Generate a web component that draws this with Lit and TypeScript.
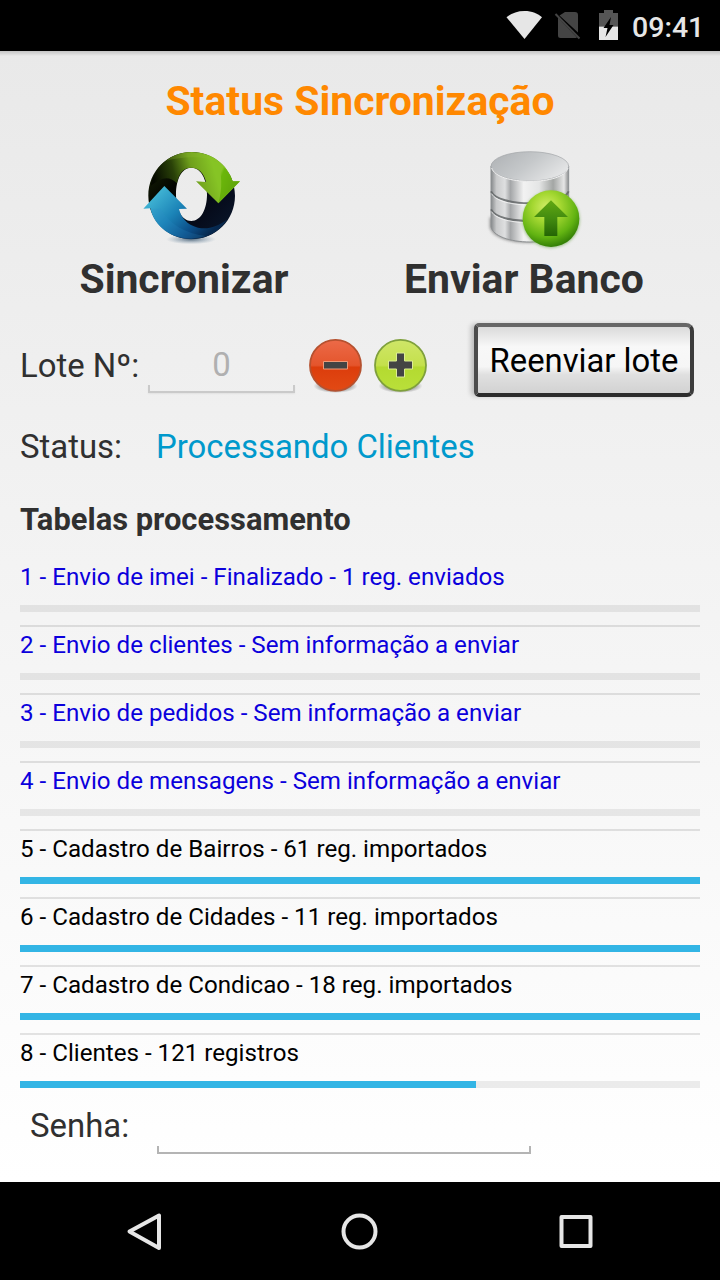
import {html, css, svg, LitElement} from 'lit';
import {customElement, property, state} from 'lit/decorators.js';
import {classMap} from 'lit/directives/class-map.js';
import {map} from 'lit/directives/map.js';

interface Tabela {
  texto: string;
  enviado: boolean;
  progresso: number;
}

const syncIcon = html`
  <svg width="120" height="115" viewBox="0 0 360 345">
    <defs>
      <linearGradient id="dark" x1="0" y1="0" x2="1" y2="1">
        <stop offset="0" stop-color="#1c2a05" />
        <stop offset="0.35" stop-color="#030501" />
        <stop offset="0.7" stop-color="#060c1c" />
        <stop offset="1" stop-color="#0a1a30" />
      </linearGradient>
      <linearGradient id="green" gradientUnits="userSpaceOnUse" x1="75" y1="130" x2="250" y2="80">
        <stop offset="0" stop-color="#050900" />
        <stop offset="0.35" stop-color="#2a4208" />
        <stop offset="0.65" stop-color="#6f9f1c" />
        <stop offset="1" stop-color="#86c425" />
      </linearGradient>
      <linearGradient id="tip" gradientUnits="userSpaceOnUse" x1="262" y1="120" x2="310" y2="140">
        <stop offset="0" stop-color="#86c425" />
        <stop offset="0.15" stop-color="#6bb70a" />
        <stop offset="1" stop-color="#62a80a" />
      </linearGradient>
      <linearGradient id="blue" gradientUnits="userSpaceOnUse" x1="90" y1="150" x2="230" y2="290">
        <stop offset="0" stop-color="#3fb3d3" />
        <stop offset="0.4" stop-color="#1b83b7" />
        <stop offset="0.75" stop-color="#0b4d87" />
        <stop offset="1" stop-color="#06284e" />
      </linearGradient>
      <radialGradient id="floor">
        <stop offset="0" stop-color="#1c3a55" stop-opacity="0.7" />
        <stop offset="1" stop-color="#5b7f9c" stop-opacity="0" />
      </radialGradient>
    </defs>
    <ellipse cx="183" cy="298" rx="75" ry="15" fill="url(#floor)" />
    <path fill="url(#dark)" fill-rule="evenodd"
      d="M185 36C258 36 315 94 315 167S258 297 185 297 55 240 55 167 112 36 185 36Z
         M184 83C155 83 138 118 138 163S155 243 184 243 231 208 231 163 213 83 184 83Z" />
    <path fill="url(#green)"
      d="M76 98C100 58 140 36 185 36C245 36 292 72 308 124L330 124L265 190L198 124L228 126C222 98 205 83 184 83C160 83 146 100 141 130C115 105 95 112 62 138C64 124 68 111 76 98Z" />
    <path fill="#8fbd2e" fill-opacity="0.25" d="M108 62C150 30 215 28 262 66C210 45 160 50 108 62Z" />
    <path fill="url(#tip)" d="M262 66Q297 88 308 124L330 124L265 190Q284 120 262 66Z" />
    <path fill="url(#blue)"
      d="M103 138L171 206L147 207C153 232 170 254 204 263C232 269 262 262 292 238C268 276 230 297 185 297C125 297 74 262 61 205L40 206Z" />
    <path fill="#2f8cc8" fill-opacity="0.2" d="M62 206Q70 255 125 283Q175 305 228 288Q130 275 92 206Z" />
  </svg>
`;

const databaseIcon = html`
  <svg width="120" height="115" viewBox="0 0 360 345">
    <defs>
      <linearGradient id="metal">
        <stop offset="0" stop-color="#85888a" />
        <stop offset="0.07" stop-color="#c9cacb" />
        <stop offset="0.18" stop-color="#dedfe0" />
        <stop offset="0.25" stop-color="#a4a6a8" />
        <stop offset="0.42" stop-color="#f2f2f2" />
        <stop offset="0.62" stop-color="#e4e5e5" />
        <stop offset="0.8" stop-color="#a3a6a4" />
        <stop offset="0.94" stop-color="#e6e6e6" />
        <stop offset="1" stop-color="#8a8c8d" />
      </linearGradient>
      <linearGradient id="lid" x1="0" y1="0" x2="1" y2="0.5">
        <stop offset="0" stop-color="#adb0b3" />
        <stop offset="0.55" stop-color="#c5c8ca" />
        <stop offset="1" stop-color="#e2e3e4" />
      </linearGradient>
      <radialGradient id="ball" cx="0.42" cy="0.3" r="0.7">
        <stop offset="0" stop-color="#d2ee68" />
        <stop offset="0.35" stop-color="#a5d832" />
        <stop offset="0.75" stop-color="#62b312" />
        <stop offset="1" stop-color="#348006" />
      </radialGradient>
      <linearGradient id="up" x1="0" y1="0" x2="0" y2="1">
        <stop offset="0" stop-color="#62a812" />
        <stop offset="0.5" stop-color="#438c10" />
        <stop offset="1" stop-color="#246405" />
      </linearGradient>
      <filter id="soft" x="-20%" y="-20%" width="140%" height="140%">
        <feGaussianBlur stdDeviation="4" />
      </filter>
    </defs>
    <path d="M44 230V262C52 294 110 312 180 308Z" fill="#555" opacity="0.6" filter="url(#soft)" />
    <path fill="url(#metal)" stroke="#8e9193" stroke-width="3"
      d="M48 78V260C53 288 105 306 165 306S278 288 281 260V78Z" />
    <path fill="none" stroke="#5e6163" stroke-width="6" opacity="0.8"
      d="M48 154C60 178 110 190 165 190S270 178 281 154M48 208C60 232 110 243 165 243S270 232 281 208" />
    <path fill="none" stroke="#f7f7f7" stroke-width="3" opacity="0.8"
      d="M50 161C62 184 112 195 165 195M50 215C62 238 112 248 165 248" />
    <ellipse cx="164.500" cy="79" rx="116.500" ry="44" fill="url(#lid)" stroke="#a0a3a6" stroke-width="2" />
    <path d="M50 84C58 110 108 124 165 124S272 110 279 84" fill="none" stroke="#f1f1f1" stroke-width="3" />
    <ellipse cx="228" cy="239" rx="86" ry="84" fill="#3f8a12" opacity="0.5" filter="url(#soft)" />
    <circle cx="228" cy="236" r="85" fill="url(#ball)" />
    <path d="M228 181L279 231H247V288H208V231H177Z" fill="url(#up)" />
  </svg>
`;

const roundIcon = (id: string, stops: string[], rim: string, sign: unknown) => html`
  <svg width="58" height="60" viewBox="0 0 58 60">
    <defs>
      <linearGradient id=${id} x1="0" y1="0" x2="0" y2="1">
        ${map(stops, (cor, i) => svg`<stop offset=${[0, 0.5, 0.54, 1][i]} stop-color=${cor} />`)}
      </linearGradient>
      <radialGradient id="${id}-shade">
        <stop offset="0.6" stop-color="#000" stop-opacity="0.35" />
        <stop offset="1" stop-color="#000" stop-opacity="0" />
      </radialGradient>
    </defs>
    <ellipse cx="28.500" cy="51" rx="22" ry="7" fill="url(#${id}-shade)" />
    <circle cx="28.500" cy="30.300" r="25.500" fill="url(#${id})" stroke=${rim} stroke-width="1.800" />
    ${sign}
  </svg>
`;

@customElement('progress-row')
class ProgressRow extends LitElement {
  static styles = css`
    :host {
      display: block;
      box-sizing: border-box;
      height: 68px;
      padding-top: 4px;
      border-bottom: 2px solid rgba(0, 0, 0, 0.1);
    }
    :host(:last-child) {
      border-bottom-color: transparent;
    }
    .text {
      height: 28px;
      margin-bottom: 14px;
      font-size: 24.15px;
      line-height: 28px;
      white-space: nowrap;
      color: #000;
    }
    .sent {
      color: #0b00dc;
    }
    .track {
      height: 6.5px;
      background: rgba(0, 0, 0, 0.07);
    }
    .bar {
      height: 100%;
      background: #33b5e5;
    }
  `;

  @property({attribute: false}) tabela!: Tabela;

  render() {
    const {texto, enviado, progresso} = this.tabela;
    return html`
      <div class=${classMap({text: true, sent: enviado})}>${texto}</div>
      <div class="track"><div class="bar" style="width: ${progresso}%"></div></div>
    `;
  }
}

@customElement('app-root')
class AppRoot extends LitElement {
  static styles = css`
    :host {
      display: flex;
      flex-direction: column;
      width: 720px;
      height: 1280px;
      overflow: hidden;
      font-family: Roboto, sans-serif;
      color: #303030;
      background: #000;
    }
    svg {
      display: block;
    }
    .statusbar {
      display: flex;
      align-items: center;
      justify-content: flex-end;
      box-sizing: border-box;
      height: 51px;
      padding-right: 16px;
      color: #e6e6e6;
      font-size: 28.5px;
      font-weight: 500;
      line-height: 51px;
    }
    .clock {
      width: 72px;
      padding-top: 3px;
      white-space: nowrap;
    }
    main {
      display: flex;
      flex-direction: column;
      box-sizing: border-box;
      height: 1131px;
      padding-top: 26px;
      background:
        linear-gradient(rgba(0, 0, 0, 0.16), transparent) top / 100% 5px no-repeat,
        linear-gradient(#e9e9e9, #fff);
    }
    h1,
    h2 {
      margin: 0;
      font-weight: bold;
      white-space: nowrap;
    }
    h1 {
      height: 48px;
      font-size: 40.9px;
      line-height: 48px;
      text-align: center;
      color: #ff8800;
    }
    .actions {
      display: grid;
      grid-template-columns: 340px 340px;
      padding: 15px 26px 0 14px;
    }
    .action {
      display: flex;
      flex-direction: column;
      align-items: center;
      font-size: 40.9px;
      font-weight: bold;
      line-height: 48px;
    }
    .sync svg {
      margin-left: 12px;
    }
    .database svg {
      margin-left: 22px;
    }
    .batch {
      display: flex;
      align-items: center;
      height: 90px;
      margin-top: 12px;
      padding-left: 20px;
      font-size: 32.9px;
      line-height: 40px;
      white-space: nowrap;
    }
    .batch .label {
      width: 128px;
      padding-top: 11px;
    }
    .field {
      box-sizing: border-box;
      border: 2px solid #b4b4b4;
      border-top: none;
      height: 8px;
    }
    .number {
      display: flex;
      flex-direction: column;
      width: 147px;
      margin-right: 12px;
      padding-top: 17px;
      text-align: center;
      color: #b0b0b0;
    }
    .number .field {
      border-color: #cacaca;
      box-shadow: 0 1px 2px rgba(0, 0, 0, 0.06);
    }
    .round {
      display: flex;
      gap: 7px;
      width: 167px;
      padding-top: 10px;
    }
    .resend {
      box-sizing: border-box;
      width: 220px;
      height: 74px;
      border: 4px solid;
      border-color: #666 #3c3c3c #2c2c2c #4c4c4c;
      border-radius: 5px 8px 7px 5px;
      background: linear-gradient(#dadada, #f8f8f8 30%, #f6f6f6 60%, #e0e0e0 72%, #d2d2d2);
      box-shadow: -4px 0 5px -1px rgba(0, 0, 0, 0.22);
      font: inherit;
      font-size: 32.8px;
      color: #000;
      padding: 2px 0 0;
    }
    .status {
      display: flex;
      height: 40px;
      margin-top: 22px;
      padding-left: 20px;
      font-size: 32.9px;
      line-height: 40px;
    }
    .status .label {
      width: 136px;
    }
    .status .value {
      color: #0099cc;
    }
    h2 {
      height: 36px;
      margin-top: 35px;
      padding-left: 20px;
      font-size: 30.9px;
      line-height: 36px;
    }
    .list {
      margin: 21px 20px 0;
    }
    .password {
      display: flex;
      height: 52px;
      padding-left: 30px;
      font-size: 32.9px;
      line-height: 40px;
      margin-top: 3px;
    }
    .password .label {
      width: 127px;
    }
    .password .field {
      align-self: flex-end;
      width: 374px;
      margin-bottom: 4px;
    }
    nav {
      display: flex;
      justify-content: center;
      gap: 168px;
      height: 98px;
      align-items: center;
    }
  `;

  @state() tabelas: Tabela[] = [
    {texto: '1 - Envio de imei - Finalizado - 1 reg. enviados', enviado: true, progresso: 0},
    {texto: '2 - Envio de clientes - Sem informação a enviar', enviado: true, progresso: 0},
    {texto: '3 - Envio de pedidos - Sem informação a enviar', enviado: true, progresso: 0},
    {texto: '4 - Envio de mensagens - Sem informação a enviar', enviado: true, progresso: 0},
    {texto: '5 - Cadastro de Bairros - 61 reg. importados', enviado: false, progresso: 100},
    {texto: '6 - Cadastro de Cidades - 11 reg. importados', enviado: false, progresso: 100},
    {texto: '7 - Cadastro de Condicao - 18 reg. importados', enviado: false, progresso: 100},
    {texto: '8 - Clientes - 121 registros', enviado: false, progresso: 67},
  ];

  render() {
    return html`
      <div class="statusbar">
        <svg width="126" height="51" viewBox="0 0 126 51">
          <path fill="#e6e6e6" d="M0.500 17.300C5 13.500 11 11 18.500 11S32 13.500 36 17.300L18.500 39Z" />
          <path fill="#444" d="M59 12H69Q72 12 72 15V32.500L53.500 15.500ZM52 17.500L71 37.500Q70 38 68 38H54.500Q52 38 52 35.500Z" />
          <path stroke="#444" stroke-width="2" d="M49.500 14L73.500 38.500" />
          <path fill="#555" d="M93 13H98V10H107V13H112V26.500H93Z" />
          <path fill="#e6e6e6" d="M93 26.500H112V40H93Z" />
          <path fill="#000" d="M105 17L97.500 28H101.500L99.500 37L107.500 25H103.500Z" />
        </svg>
        <div class="clock">09:41</div>
      </div>
      <main>
        <h1>Status Sincronização</h1>
        <div class="actions">
          <div class="action sync">${syncIcon}<span>Sincronizar</span></div>
          <div class="action database">${databaseIcon}<span>Enviar Banco</span></div>
        </div>
        <div class="batch">
          <div class="label">Lote Nº:</div>
          <div class="number">
            <span>0</span>
            <div class="field"></div>
          </div>
          <div class="round">
            ${roundIcon('minus', ['#ec6a48', '#e4552c', '#dc3d0c', '#e24a14'], '#b5512f',
              svg`<path d="M16.500 26.500H40.500V34H16.500Z" fill="#444" stroke="#f09a78" stroke-width="1" />`)}
            ${roundIcon('plus', ['#cfe668', '#c4e04c', '#b4da30', '#b9e03a'], '#7fa03c',
              svg`<path d="M24.500 18H32.500V26H40.500V34H32.500V42H24.500V34H16.500V26H24.500Z" fill="#444" stroke="#dcec96" stroke-width="1" />`)}
          </div>
          <button class="resend">Reenviar lote</button>
        </div>
        <div class="status">
          <div class="label">Status:</div>
          <div class="value">Processando Clientes</div>
        </div>
        <h2>Tabelas processamento</h2>
        <div class="list">
          ${map(this.tabelas, (tabela) => html`<progress-row .tabela=${tabela}></progress-row>`)}
        </div>
        <div class="password">
          <div class="label">Senha:</div>
          <div class="field"></div>
        </div>
      </main>
      <nav>
        ${map([
          svg`<path d="M39 8.500V41L9.500 24.500Z" />`,
          svg`<circle cx="23.500" cy="24.500" r="16" />`,
          svg`<rect x="9.500" y="10" width="29" height="29" />`,
        ], (forma) => html`
          <svg width="48" height="48" viewBox="0 0 48 48" fill="none" stroke="#e6e6e6"
            stroke-width="4" stroke-linejoin="round">${forma}</svg>
        `)}
      </nav>
    `;
  }
}
